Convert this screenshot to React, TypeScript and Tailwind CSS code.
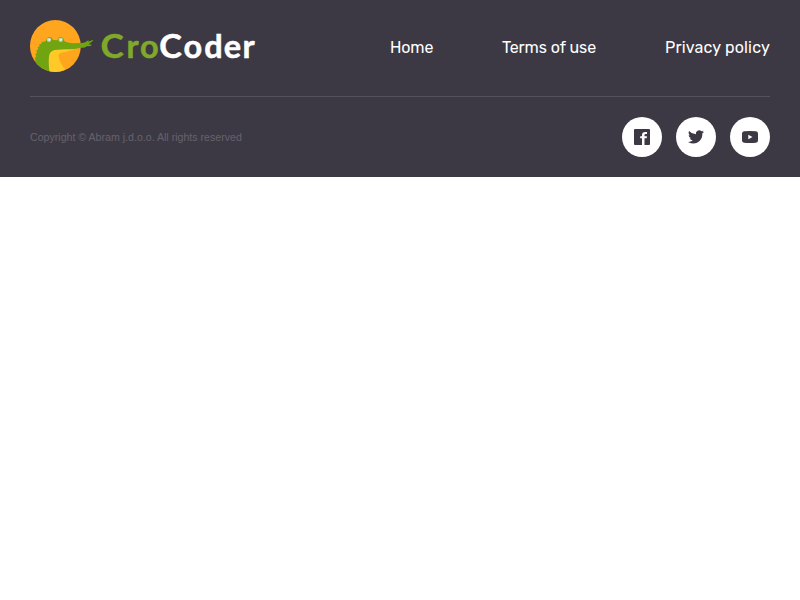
import React from "react";

function Logo() {
  return (
    <svg width="226" height="52" viewBox="30 20 226 52" role="img" aria-label="CroCoder">
      <defs>
        <clipPath id="disc">
          <ellipse cx="55.4" cy="46" rx="25.4" ry="26" />
          <rect x="55" y="30" width="41" height="19" />
        </clipPath>
      </defs>
      <ellipse cx="55.4" cy="46" rx="25.4" ry="26" fill="#ffa51e" />
      <g clipPath="url(#disc)">
        <g transform="translate(24 14) scale(.33333)">
          <path d="M72 180L76 106H152Q136 112 113 116Q101 118 104 128Q107 145 124 168L100 180Z" fill="#ffca28" />
          <path
            d="M20 150L35 139L32 133L37 127L34 121L39 116L37 109L43 106L41 99L47 97L46 90L52 90L53 83L58 84Q62 81 66 81Q68 69 77 69Q85 70 87 78L100 79Q103 69 111 69Q119 71 121 81Q130 87 148 88L170 87Q181 88 190 81L193 78L194 83L207 77Q208 80 202 85L194 91L204 92L200 96L188 97Q181 103 170 101Q153 106 121 106L91 108Q77 112 75 127Q72 151 78 180H35Z"
            fill="#70a511"
          />
          <g fill="#c3d6b8">
            <circle cx="75" cy="77.500" r="6.5" />
            <circle cx="110" cy="77.500" r="6.5" />
          </g>
          <g fill="#e6eee5">
            <circle cx="76" cy="77" r="3" />
            <circle cx="111" cy="77" r="3" />
          </g>
        </g>
      </g>
      <g fontFamily="Lato, sans-serif" fontWeight="700" fontSize="32.5" strokeWidth="0.5">
        <g fill="#80a82a" stroke="#80a82a">
          <text x="100.7" y="57.7" textLength="23" lengthAdjust="spacingAndGlyphs">C</text>
          <text x="126.4 139.9" y="57.7">ro</text>
        </g>
        <g fill="#fff" stroke="#fff">
          <text x="159.3" y="57.7" textLength="22.6" lengthAdjust="spacingAndGlyphs">C</text>
          <text x="183.500 204.300 223.800 242.500" y="57.7">oder</text>
        </g>
      </g>
      <path d="M103.500 42l-2 2 1.400 1-1.600 2 3 1z" fill="#80a82a" />
    </svg>
  );
}

const icons = [
  {
    name: "Facebook",
    path: "M5 3H19Q20 3 20 4V18Q20 19 19 19H14.500V12.300H16.700L17 10.300H14.500V9Q14.500 7.900 15.700 7.900H17V5.900H15.200Q12 5.900 12 9V10.300H10.200V12.300H12V19H5Q4 19 4 18V4Q4 3 5 3Z",
  },
  {
    name: "Twitter",
    path: "M20 5.700q-.9.4-1.900.5 1-.6 1.400-1.700-1 .6-2 .8a3.300 3.300 0 0 0-5.600 3Q7.800 8.100 5.100 4.900q-1.300 2.700 1 4.500-.8 0-1.500-.4 0 2.400 2.600 3.200-.8.2-1.500 0 .7 2.100 3.100 2.300Q6.800 16 4 15.900q6.400 3.700 11.300-.7 3.300-3.200 3-7.800 1-.7 1.700-1.700Z",
  },
  {
    name: "YouTube",
    path: "M6 5.300Q12 4.700 18 5.300Q20 5.500 20 7.500V14.500Q20 16.500 18 16.700Q12 17.300 6 16.700Q4 16.500 4 14.500V7.500Q4 5.500 6 5.300ZM10.300 8.700V13.300L14.500 11Z",
  },
];

export default function App() {
  return (
    <footer className="bg-[#3d3944] px-[30px] py-5">
      <div className="flex h-[77px] items-start justify-between border-b border-[#55515c]">
        <Logo />
        <nav className="flex gap-[69px] pt-4 font-[Rubik,Roboto,sans-serif] text-base leading-6 text-white">
          <a className="w-[43px] whitespace-nowrap tracking-[-0.15px]">Home</a>
          <a className="w-[94px] whitespace-nowrap tracking-[-0.05px]">Terms of use</a>
          <a className="w-[105px] whitespace-nowrap tracking-[0.18px]">Privacy policy</a>
        </nav>
      </div>
      <div className="flex items-center justify-between pt-5">
        <p className="font-['Liberation_Sans',Arial,sans-serif] text-[10.62px] leading-4 text-[#66626c]">
          Copyright © Abram j.d.o.o. All rights reserved
        </p>
        <div className="flex gap-3.5">
          {icons.map((icon) => (
            <a key={icon.name} aria-label={icon.name} className="flex size-10 items-center justify-center rounded-full bg-white">
              <svg width="24" height="22" viewBox="0 0 24 22" fill="#3d3944" fillRule="evenodd">
                <path d={icon.path} />
              </svg>
            </a>
          ))}
        </div>
      </div>
    </footer>
  );
}
